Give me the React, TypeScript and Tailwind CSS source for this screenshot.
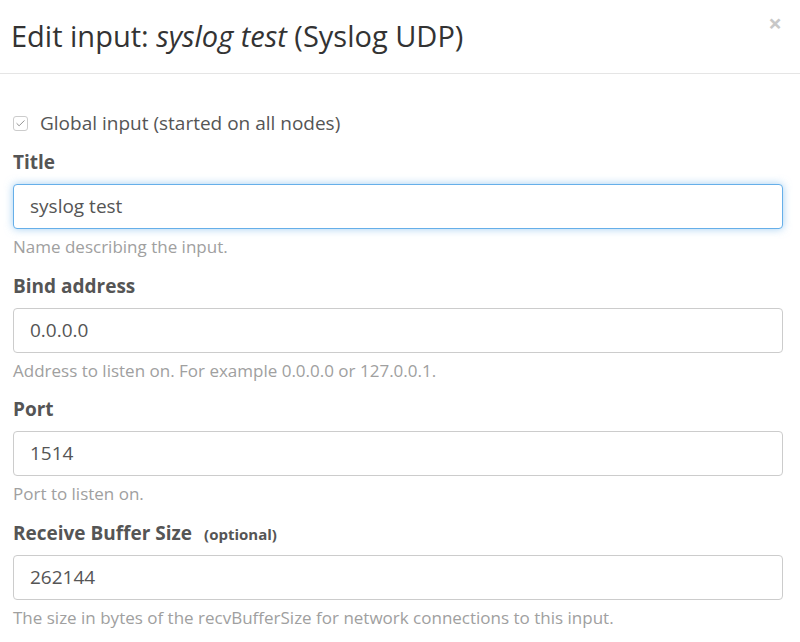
import { Check } from 'lucide-react';

interface FieldProps {
  label: string;
  optional?: boolean;
  value: string;
  help: string;
  focused?: boolean;
}

function Field({ label, optional, value, help, focused }: FieldProps) {
  return (
    <div className="flex flex-col">
      <label className="flex items-baseline h-[26px] leading-[26px] text-[19px] font-bold text-[#555]">
        {label}
        {optional && <span className="ml-3 text-[15px] font-bold text-[#555]">(optional)</span>}
      </label>
      <div
        className={
          focused
            ? 'mt-[9px] h-[45px] flex items-center px-4 rounded-[4px] border border-[#66afe9] bg-white shadow-[0_0_8px_rgba(102,175,233,0.6)]'
            : 'mt-[9px] h-[45px] flex items-center px-4 rounded-[4px] border border-[#ccc] bg-white'
        }
      >
        <span className="text-[19px] text-[#555]">{value}</span>
      </div>
      <p className="mt-[6px] h-[24px] leading-[24px] text-[17px] text-[#a0a0a0]">{help}</p>
    </div>
  );
}

export default function App() {
  return (
    <div className="w-[800px] h-[642px] overflow-hidden bg-white font-['Open_Sans',sans-serif]">
      <div className="flex items-start justify-between h-[74px] border-b border-[#e5e5e5] pl-[11px] pr-[18px] pt-[16px]">
        <h4 className="text-[29px] leading-[40px] text-[#333]">
          Edit input: <em>syslog test</em> (Syslog UDP)
        </h4>
        <button className="-mt-[5px] text-[24px] font-bold leading-none text-[#c8c8c8]">×</button>
      </div>
      <div className="pl-[13px] pr-[17px] pt-[39px]">
        <div className="flex items-center gap-3 h-[20px]">
          <span className="flex items-center justify-center w-[15px] h-[15px] rounded-[3px] border border-[#ccc]">
            <Check className="w-[11px] h-[11px] text-[#888]" strokeWidth={2} />
          </span>
          <span className="text-[19px] text-[#555]">Global input (started on all nodes)</span>
        </div>
        <div className="mt-[16px] flex flex-col gap-[13.5px]">
          <Field label="Title" value="syslog test" help="Name describing the input." focused />
          <Field
            label="Bind address"
            value="0.0.0.0"
            help="Address to listen on. For example 0.0.0.0 or 127.0.0.1."
          />
          <Field label="Port" value="1514" help="Port to listen on." />
          <Field
            label="Receive Buffer Size"
            optional
            value="262144"
            help="The size in bytes of the recvBufferSize for network connections to this input."
          />
        </div>
      </div>
    </div>
  );
}
